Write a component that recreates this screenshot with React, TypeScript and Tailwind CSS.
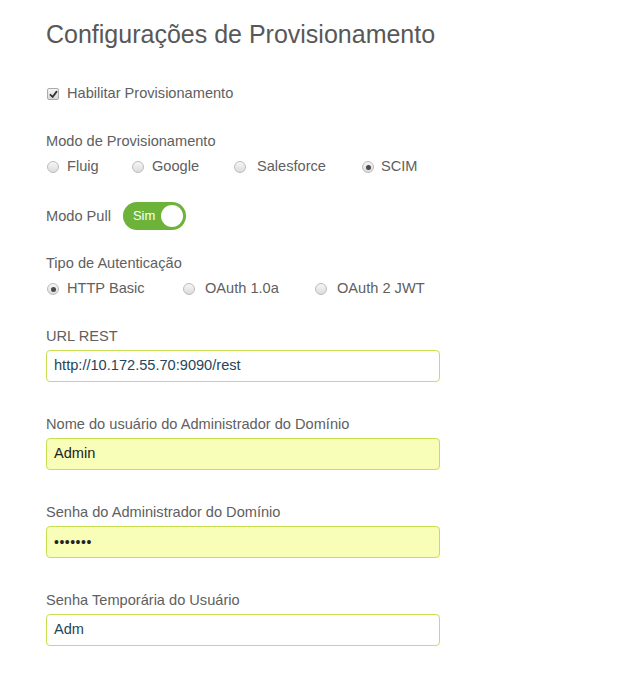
import React from "react";

const font = { fontFamily: '"Liberation Sans", Arial, Helvetica, sans-serif' };

function Radio({ checked }: { checked?: boolean }) {
  return (
    <span className="relative inline-flex h-[12px] w-[12px] shrink-0 items-center justify-center rounded-full border border-[#bcbcbc] bg-gradient-to-b from-[#f6f6f6] to-[#dcdcdc]">
      {checked && <span className="h-[5px] w-[5px] rounded-full bg-[#4a4a4a]" />}
    </span>
  );
}

function Checkbox() {
  return (
    <span className="relative inline-flex h-[12px] w-[12px] shrink-0 items-center justify-center rounded-[2px] border border-[#ababab] bg-gradient-to-b from-[#f4f4f4] to-[#d8d8d8]">
      <svg width="9" height="9" viewBox="0 0 9 9">
        <path d="M1.5 4.8 L3.6 7 L7.6 1.6" stroke="#333" strokeWidth="1.8" fill="none" strokeLinecap="round" strokeLinejoin="round" />
      </svg>
    </span>
  );
}

function RadioItem({ label, checked, w, gap }: { label: string; checked?: boolean; w: string; gap: string }) {
  return (
    <div className={`flex items-center ${w}`}>
      <Radio checked={checked} />
      <span className={gap}>{label}</span>
    </div>
  );
}

function Field({ label, value, autofill, dots }: { label: string; value: string; autofill?: boolean; dots?: boolean }) {
  return (
    <div>
      <div className="h-[20px] leading-[22px]">{label}</div>
      <div
        className={`mt-[5px] flex h-[32px] w-[394px] items-center rounded-[4px] border border-[#c8df52] px-[7px] ${
          autofill ? "bg-[#f8fdb8] text-[#222]" : "bg-white text-[#23465a]"
        }`}
      >
        {dots ? <span className="text-[14px] tracking-[0.5px] text-[#222]">•••••••</span> : value}
      </div>
    </div>
  );
}

export default function App() {
  return (
    <div className="min-h-[690px] w-[627px] bg-white pl-[46px] pt-[18px] text-[14.6px] text-[#606060]" style={font}>
      <h1 className="h-[32px] text-[25px] leading-[32px] text-[#585858]">Configurações de Provisionamento</h1>

      <div className="mt-[34px] flex h-[20px] items-center pl-[1px]">
        <Checkbox />
        <span className="ml-[8px]">Habilitar Provisionamento</span>
      </div>

      <div className="mt-[27px] h-[20px] leading-[20px]">Modo de Provisionamento</div>
      <div className="mt-[6px] flex h-[20px] items-center pl-[1px]">
        <RadioItem label="Fluig" w="w-[85px]" gap="ml-[8px]" />
        <RadioItem label="Google" w="w-[102px]" gap="ml-[8px]" />
        <RadioItem label="Salesforce" w="w-[128px]" gap="ml-[11px]" />
        <RadioItem label="SCIM" checked w="w-[80px]" gap="ml-[7px]" />
      </div>

      <div className="mt-[25px] flex h-[28px] items-center">
        <span className="pt-[1px]">Modo Pull</span>
        <div className="ml-[12px] flex h-[28px] w-[63px] items-center justify-between rounded-full bg-[#6db33a] pl-[10px] pr-[3px]">
          <span className="text-[13px] text-white">Sim</span>
          <span className="h-[22px] w-[22px] rounded-full bg-white" />
        </div>
      </div>

      <div className="mt-[22px] h-[20px] leading-[22px]">Tipo de Autenticação</div>
      <div className="mt-[7px] flex h-[20px] items-center pl-[1px]">
        <RadioItem label="HTTP Basic" checked w="w-[136px]" gap="ml-[8px]" />
        <RadioItem label="OAuth 1.0a" w="w-[132px]" gap="ml-[10px]" />
        <RadioItem label="OAuth 2 JWT" w="w-[120px]" gap="ml-[10px]" />
      </div>

      <div className="mt-[26px]">
        <Field label="URL REST" value="http://10.172.55.70:9090/rest" />
      </div>
      <div className="mt-[31px]">
        <Field label="Nome do usuário do Administrador do Domínio" value="Admin" autofill />
      </div>
      <div className="mt-[31px]">
        <Field label="Senha do Administrador do Domínio" value="" autofill dots />
      </div>
      <div className="mt-[31px]">
        <Field label="Senha Temporária do Usuário" value="Adm" />
      </div>
    </div>
  );
}
